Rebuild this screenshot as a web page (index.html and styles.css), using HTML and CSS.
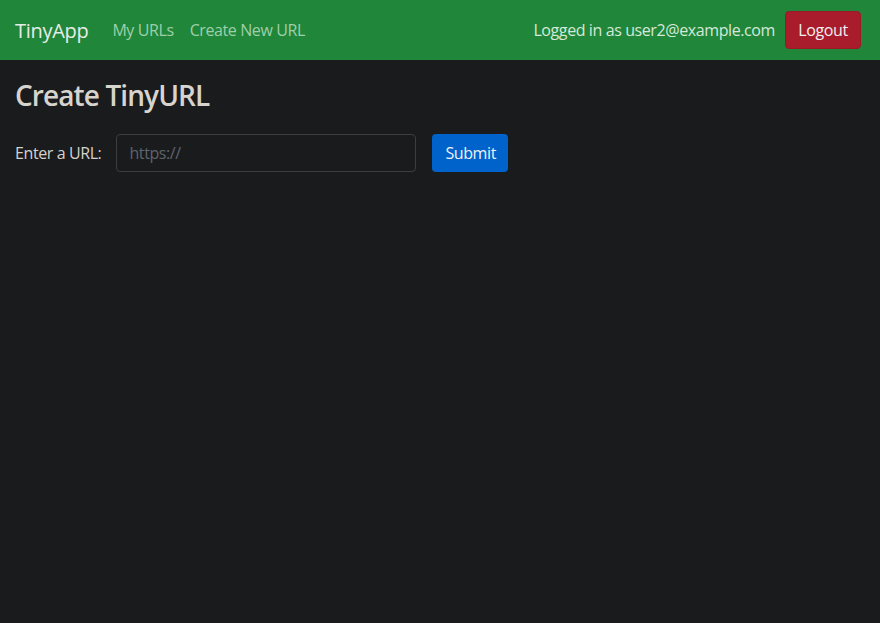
FILE: index.html
```html
<!DOCTYPE html>
<html lang="en">
<head>
<meta charset="utf-8">
<title>TinyApp</title>
<link rel="stylesheet" href="styles.css">
</head>
<body>
<nav class="navbar">
  <div class="nav-left">
    <a class="brand" href="#">TinyApp</a>
    <a class="nav-link" href="#">My URLs</a>
    <a class="nav-link" href="#">Create New URL</a>
  </div>
  <div class="nav-right">
    <span class="login-text">Logged in as user2@example.com</span>
    <button class="btn btn-danger" type="button">Logout</button>
  </div>
</nav>
<main class="content">
  <h1 class="title">Create TinyURL</h1>
  <form class="url-form">
    <label class="label" for="longURL">Enter a URL:</label>
    <input class="input" id="longURL" type="text" placeholder="https://">
    <button class="btn btn-primary" type="submit">Submit</button>
  </form>
</main>
</body>
</html>
```
FILE: styles.css
```css
* { box-sizing: border-box; }
html, body { margin: 0; padding: 0; }
body {
  background: #1a1b1d;
  color: #d5d2cc;
  font-family: "Open Sans", "Noto Sans", sans-serif;
  font-size: 16px;
  letter-spacing: -0.4px;
  min-height: 623px;
}
.navbar {
  height: 60px;
  background: #20863a;
  display: flex;
  align-items: center;
  justify-content: space-between;
  padding: 0 19px 0 15px;
}
.nav-left, .nav-right { display: flex; align-items: center; }
.brand {
  color: #e6ece6;
  font-size: 20px;
  letter-spacing: -0.3px;
  text-decoration: none;
  margin-right: 24px;
}
.nav-link {
  color: #9fcfa9;
  text-decoration: none;
  margin-right: 16px;
}
.login-text { color: #d6e8d8; margin-right: 10px; }
.btn {
  font-family: inherit;
  font-size: 16px;
  letter-spacing: -0.4px;
  border: 1px solid transparent;
  border-radius: 4px;
  padding: 0 12px;
  height: 38px;
  color: #f0f0f0;
  cursor: pointer;
}
.btn-danger { background: #a81c2c; width: 76px; border-color: #9a1a28; }
.btn-primary { background: #0063cc; width: 76px; }
.content { padding: 0 15px; }
.title {
  margin: 18px 0 0;
  font-size: 28px;
  font-weight: 600;
  letter-spacing: -0.9px;
  line-height: 34px;
  color: #d7d4ce;
}
.url-form {
  display: flex;
  align-items: center;
  margin-top: 22px;
}
.label { margin-right: 15px; color: #d5d2cc; }
.input {
  width: 300px;
  height: 38px;
  background: #1a1b1d;
  border: 1px solid #3b3f43;
  border-radius: 4px;
  padding: 0 12px;
  font-family: inherit;
  font-size: 16px;
  letter-spacing: -0.4px;
  color: #d5d2cc;
  margin-right: 16px;
}
.input::placeholder { color: #5f646a; }
```
